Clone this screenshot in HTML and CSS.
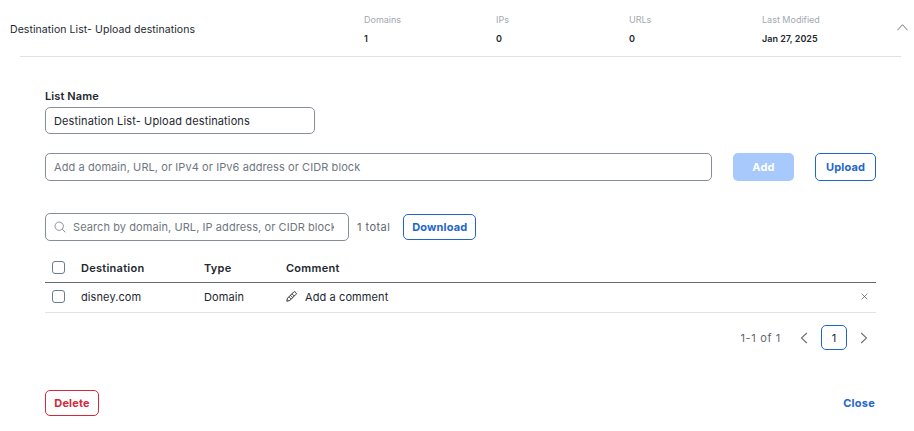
FILE: index.html
```html
<!DOCTYPE html>
<html lang="en">
<head>
<meta charset="utf-8">
<title>Destination List</title>
<link rel="stylesheet" href="styles.css">
</head>
<body>
<header class="summary">
  <div class="summary-title">Destination List- Upload destinations</div>
  <dl class="metrics">
    <div class="metric m1"><dt>Domains</dt><dd>1</dd></div>
    <div class="metric m2"><dt>IPs</dt><dd>0</dd></div>
    <div class="metric m3"><dt>URLs</dt><dd>0</dd></div>
    <div class="metric m4"><dt>Last Modified</dt><dd>Jan 27, 2025</dd></div>
  </dl>
  <svg class="chevron-up" width="11" height="7" viewBox="0 0 11 7" fill="none"><path d="M.4 6.300 5.500.7l5.100 5.600" stroke="#565d66" stroke-width=".85"/></svg>
</header>
<div class="rule"></div>
<main class="panel">
  <label class="field-label">List Name</label>
  <div class="input name-input">Destination List- Upload destinations</div>
  <div class="add-row">
    <div class="input add-input placeholder">Add a domain, URL, or IPv4 or IPv6 address or CIDR block</div>
    <button class="btn btn-disabled">Add</button>
    <button class="btn btn-outline upload">Upload</button>
  </div>
  <div class="search-row">
    <div class="input search-input placeholder">
      <svg class="search-icon" width="12" height="12" viewBox="0 0 12 12" fill="none"><circle cx="5.2" cy="5.2" r="4.2" stroke="#7d858f" stroke-width=".9"/><path d="m8.3 8.3 3 3" stroke="#7d858f" stroke-width=".9"/></svg>
      <span class="search-text">Search by domain, URL, IP address, or CIDR block</span>
    </div>
    <span class="total">1 total</span>
    <button class="btn btn-outline download">Download</button>
  </div>
  <div class="table-row table-head">
    <span class="checkbox"></span>
    <span class="col-dest">Destination</span>
    <span class="col-type">Type</span>
    <span class="col-comment">Comment</span>
  </div>
  <div class="table-row table-body">
    <span class="checkbox"></span>
    <span class="col-dest">disney.com</span>
    <span class="col-type">Domain</span>
    <span class="col-comment comment-cell">
      <svg class="pencil" width="11" height="11" viewBox="0 0 11 11" fill="none"><path d="M.8 10.200l.7-3L7.700 1a1.100 1.100 0 0 1 1.500 0l.8.8a1.100 1.100 0 0 1 0 1.500L3.800 9.500.8 10.200Z" fill="#fff" stroke="#2b3037" stroke-width="1"/><path d="M3 5.800l2.200 2.200M4.500 4.300l2.200 2.200M6 2.800l2.200 2.200" stroke="#2b3037" stroke-width=".9"/></svg>
      Add a comment
    </span>
    <svg class="remove" width="7" height="7" viewBox="0 0 7 7" fill="none"><path d="m.7.7 5.600 5.600M6.300.7.7 6.300" stroke="#5f666f" stroke-width=".8"/></svg>
  </div>
  <nav class="pager">
    <span class="pager-count">1-1 of 1</span>
    <svg class="pager-arrow" width="8" height="12" viewBox="0 0 8 12" fill="none"><path d="M6.800 1 1.500 6l5.300 5" stroke="#6a717a" stroke-width="1.100"/></svg>
    <span class="pager-page">1</span>
    <svg class="pager-arrow" width="8" height="12" viewBox="0 0 8 12" fill="none"><path d="M1.200 1l5.300 5-5.300 5" stroke="#6a717a" stroke-width="1.100"/></svg>
  </nav>
  <footer class="actions">
    <button class="btn btn-danger">Delete</button>
    <button class="link-close">Close</button>
  </footer>
</main>
</body>
</html>
```
FILE: styles.css
```css
* { box-sizing: border-box; }
html, body { margin: 0; padding: 0; }
body {
  width: 914px;
  height: 431px;
  overflow: hidden;
  background: #fff;
  color: #232830;
  font-family: Inter, "Liberation Sans", sans-serif;
  font-size: 11px;
  letter-spacing: .1px;
}
.summary {
  display: flex;
  align-items: center;
  height: 56px;
  padding: 3px 0 0 10px;
}
.summary-title { width: 354px; font-size: 10.5px; letter-spacing: .07px; color: #232830; }
.metrics { display: flex; margin: -1px 0 0; }
.metric { display: flex; flex-direction: column; gap: 9px; width: 133px; }
.metric.m1 { width: 132px; }
.metric.m4 { width: 136px; }
.metric dt { font-size: 9px; line-height: 10px; color: #a3a9b1; letter-spacing: 0; }
.metric dd { margin: 0; font-size: 9px; line-height: 10px; font-weight: 600; color: #232830; letter-spacing: 0; }
.chevron-up { flex: none; margin-top: -5px; margin-left: -1px; }
.rule { height: 1px; margin: 0 13px 0 20px; background: #dfe1e4; }
.panel { padding: 32px 38px 0 45px; }
.field-label { display: block; font-size: 11px; font-weight: 600; line-height: 14px; margin-bottom: 4px; padding-top: 1px; margin-top: -1px; }
.input {
  display: flex;
  align-items: center;
  border: 1px solid #868e99;
  border-radius: 5px;
  padding: 0 8px;
  background: #fff;
  font-size: 11px;
  letter-spacing: .13px;
  color: #232830;
  white-space: nowrap;
  overflow: hidden;
}
.placeholder { color: #6f7781; letter-spacing: .08px; }
.name-input { width: 270px; height: 27px; }
.add-row { display: flex; margin-top: 19px; }
.add-input { width: 667px; height: 28px; }
.btn {
  font-family: inherit;
  font-size: 11px;
  font-weight: 700;
  letter-spacing: .15px;
  border-radius: 5px;
  border: 1px solid transparent;
  background: #fff;
  padding: 0;
}
.btn-disabled { width: 61px; height: 28px; margin-left: 21px; background: #a8c9fc; color: #fff; }
.btn-outline { border-color: #1e66cc; color: #1e66cc; }
.upload { width: 61px; height: 28px; margin-left: 21px; }
.search-row { display: flex; align-items: center; margin-top: 32px; }
.search-input { width: 304px; height: 28px; padding: 0 14px 0 8px; }
.search-icon { flex: none; margin-right: 7px; }
.search-text { overflow: hidden; }
.total { margin-left: 8px; color: #5f666f; letter-spacing: .45px; }
.download { width: 73px; height: 26px; margin-left: 13px; }
.table-row { position: relative; display: flex; align-items: center; }
.table-head { height: 42px; padding-top: 13px; font-weight: 600; border-bottom: 1px solid #646b75; font-size: 11px; letter-spacing: .27px; }
.table-body { height: 30px; padding-bottom: 2px; border-bottom: 1px solid #e0e3e8; }
.checkbox {
  flex: none;
  width: 13px;
  height: 13px;
  margin: -2px 0 0 7px;
  border: 1px solid #6c7c92;
  border-radius: 3px;
}
.table-body .checkbox { margin-top: 0; }
.col-dest { width: 123px; margin-left: 16px; }
.col-type { width: 82px; }
.comment-cell { display: flex; align-items: center; gap: 8px; }
.pencil { flex: none; }
.remove { position: absolute; right: 8px; top: 10px; }
.pager { display: flex; align-items: center; justify-content: flex-end; margin-top: 12px; height: 25px; }
.pager-count { color: #5f666f; margin-right: 19px; letter-spacing: .65px; }
.pager-page {
  display: flex;
  align-items: center;
  justify-content: center;
  width: 26px;
  height: 25px;
  border: 1px solid #1e66cc;
  border-radius: 5px;
  margin: 0 13px;
}
.pager-arrow { flex: none; }
.pager-arrow:last-child { margin-right: 8px; }
.actions { display: flex; align-items: center; justify-content: space-between; margin-top: 40px; }
.btn-danger { width: 54px; height: 26px; border-color: #d02a3c; color: #d02a3c; }
.link-close { font-family: inherit; font-size: 11px; font-weight: 700; letter-spacing: .25px; color: #1e66cc; background: none; border: 0; padding: 0; margin-right: 1px; }
```
